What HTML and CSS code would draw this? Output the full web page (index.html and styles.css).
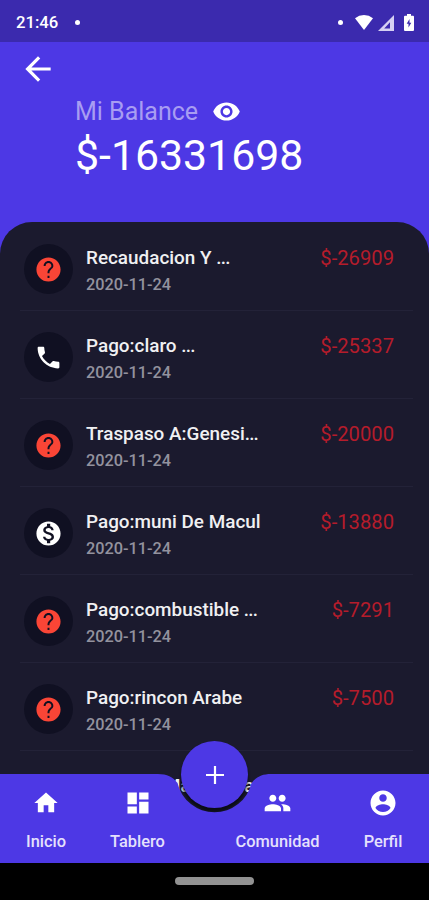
FILE: index.html
```html
<!DOCTYPE html>
<html lang="es">
<head>
<meta charset="utf-8">
<title>Mi Balance</title>
<link rel="stylesheet" href="styles.css">
</head>
<body>
<svg class="defs" aria-hidden="true">
  <symbol id="help" viewBox="0 0 24 24"><path d="M12 2C6.480 2 2 6.480 2 12s4.480 10 10 10 10-4.480 10-10S17.520 2 12 2zm.800 17h-1.600v-1.800h1.600v1.800zm2.070-7.750l-.9.920C13.250 12.900 12.800 13.500 12.800 15h-1.600v-.5c0-1.100.450-2.100 1.170-2.830l1.240-1.260c.370-.360.790-.860.790-1.410 0-1.300-1.100-2.400-2.400-2.400s-2.400 1.100-2.400 2.400H8c0-2.210 1.790-4 4-4s4 1.790 4 4c0 .880-.560 1.680-1.130 2.250z"/></symbol>
  <symbol id="phone" viewBox="0 0 24 24"><path d="M6.620 10.790c1.440 2.830 3.760 5.140 6.590 6.590l2.200-2.200c.270-.270.670-.360 1.020-.240 1.120.370 2.330.570 3.570.570.550 0 1 .450 1 1V20c0 .550-.450 1-1 1-9.390 0-17-7.610-17-17 0-.550.450-1 1-1h3.500c.550 0 1 .450 1 1 0 1.250.2 2.450.570 3.570.110.350.030.740-.250 1.020l-2.200 2.200z"/></symbol>
  <symbol id="money" viewBox="0 0 24 24"><path d="M12 2C6.480 2 2 6.480 2 12s4.480 10 10 10 10-4.480 10-10S17.520 2 12 2zm1.410 16.090V20h-2.670v-1.930c-1.710-.360-3.160-1.460-3.270-3.400h1.960c.1 1.050.820 1.870 2.650 1.870 1.960 0 2.400-.980 2.400-1.590 0-.830-.440-1.610-2.670-2.140-2.480-.6-4.180-1.620-4.180-3.670 0-1.720 1.390-2.840 3.110-3.210V4h2.670v1.950c1.860.450 2.790 1.860 2.850 3.390H14.300c-.050-1.110-.640-1.870-2.220-1.870-1.500 0-2.400.680-2.400 1.640 0 .840.650 1.390 2.670 1.910s4.180 1.390 4.180 3.910c-.010 1.830-1.380 2.830-3.120 3.160z"/></symbol>
</svg>

<div class="screen">
  <header class="status">
    <span class="time">21:46</span><i class="dot"></i>
    <span class="status-icons">
      <i class="dot"></i>
      <svg class="wifi" viewBox="0 0 18 15"><path d="M0 3.200Q4 0 9 0t9 3.200L9 15z"/></svg>
      <svg class="signal" viewBox="0 0 16 16"><path fill-rule="evenodd" d="M0 16L16 0v16zM6.200 13.600H12V7.200z"/></svg>
      <svg class="battery" viewBox="0 0 10 17"><path fill-rule="evenodd" d="M3 0h4v1.700h2q1 0 1 1V16q0 1-1 1H1q-1 0-1-1V2.700q0-1 1-1h2zM5.500 5L2.700 9.800h1.800V13.500L7.300 8.700H5.500z"/></svg>
    </span>
  </header>

  <section class="balance">
    <svg class="back" viewBox="0 0 24 24"><path d="M20 11H7.830l5.590-5.590L12 4l-8 8 8 8 1.410-1.410L7.830 13H20z"/></svg>
    <div class="label">Mi Balance
      <svg class="eye" viewBox="0 0 24 24"><path d="M12 4.500C7 4.500 2.730 7.610 1 12c1.730 4.390 6 7.500 11 7.500s9.270-3.110 11-7.500c-1.730-4.390-6-7.500-11-7.500zM12 17c-2.760 0-5-2.240-5-5s2.240-5 5-5 5 2.240 5 5-2.240 5-5 5zm0-8c-1.660 0-3 1.340-3 3s1.340 3 3 3 3-1.340 3-3-1.340-3-3-3z"/></svg>
    </div>
    <div class="total">$-16331698</div>
  </section>

  <main class="list">
    <article class="row"><span class="badge red"><svg><use href="#help"/></svg></span><div class="info"><h2>Recaudacion Y <span class="more">...</span></h2><p>2020-11-24</p></div><b class="amount">$-26909</b></article>
    <article class="row"><span class="badge"><svg><use href="#phone"/></svg></span><div class="info"><h2>Pago:claro <span class="more">...</span></h2><p>2020-11-24</p></div><b class="amount">$-25337</b></article>
    <article class="row"><span class="badge red"><svg><use href="#help"/></svg></span><div class="info"><h2>Traspaso A:Genesi<span class="more">...</span></h2><p>2020-11-24</p></div><b class="amount">$-20000</b></article>
    <article class="row"><span class="badge"><svg><use href="#money"/></svg></span><div class="info"><h2>Pago:muni De Macul</h2><p>2020-11-24</p></div><b class="amount">$-13880</b></article>
    <article class="row"><span class="badge red"><svg><use href="#help"/></svg></span><div class="info"><h2>Pago:combustible <span class="more">...</span></h2><p>2020-11-24</p></div><b class="amount">$-7291</b></article>
    <article class="row"><span class="badge red"><svg><use href="#help"/></svg></span><div class="info"><h2>Pago:rincon Arabe</h2><p>2020-11-24</p></div><b class="amount">$-7500</b></article>
    <article class="row last"><span class="badge"></span><div class="info"><h2>Pago:las Mandarina</h2></div></article>
  </main>

  <nav class="tabs">
    <span class="add"><svg viewBox="0 0 18 18"><path d="M7.900 0h2.200v7.900H18v2.200h-7.900V18H7.900v-7.900H0V7.900h7.900z"/></svg></span>
    <svg class="tabs-shape" viewBox="0 0 429 89"><path d="M0 0H158C167 0 173 3 177.500 9A38 38 0 0 0 251.500 9C256 3 262 0 271 0H429V89H0z"/></svg>
    <a class="tab home"><svg viewBox="0 0 24 24"><path d="M10 20v-6h4v6h5v-8h3L12 3 2 12h3v8z"/></svg>Inicio</a>
    <a class="tab board"><svg viewBox="0 0 24 24"><path d="M3 13h8V3H3v10zm0 8h8v-6H3v6zm10 0h8V11h-8v10zm0-18v6h8V3h-8z"/></svg>Tablero</a>
    <a class="tab people"><svg viewBox="0 0 24 24"><path d="M16 11c1.660 0 2.990-1.340 2.990-3S17.660 5 16 5s-3 1.340-3 3 1.340 3 3 3zm-8 0c1.660 0 2.990-1.340 2.990-3S9.660 5 8 5 5 6.340 5 8s1.340 3 3 3zm0 2c-2.330 0-7 1.170-7 3.500V19h14v-2.500C15 14.170 10.330 13 8 13zm8 0c-.290 0-.620.020-.970.050 1.160.840 1.970 1.970 1.970 3.450V19h6v-2.500c0-2.330-4.670-3.500-7-3.500z"/></svg>Comunidad</a>
    <a class="tab profile"><svg viewBox="0 0 24 24"><path d="M12 2C6.480 2 2 6.480 2 12s4.480 10 10 10 10-4.480 10-10S17.520 2 12 2zm0 3c1.660 0 3 1.340 3 3s-1.340 3-3 3-3-1.340-3-3 1.340-3 3-3zm0 14.200c-2.500 0-4.710-1.280-6-3.220.030-1.990 4-3.080 6-3.080s5.970 1.090 6 3.080c-1.290 1.940-3.500 3.220-6 3.220z"/></svg>Perfil</a>
  </nav>
  <footer class="system"><i class="pill"></i></footer>
</div>
</body>
</html>
```
FILE: styles.css
```css
* { box-sizing: border-box; }
body { margin: 0; font-family: Roboto, "Liberation Sans", sans-serif; background: #000; }
svg { display: block; fill: currentColor; }
h2, p { margin: 0; }
.defs { position: absolute; width: 0; height: 0; }
.screen { width: 429px; height: 900px; display: flex; flex-direction: column; overflow: hidden; background: #4d38e5; color: #fff; }

.status { height: 42px; flex: none; display: flex; align-items: center; padding: 3px 15px 0 16px; background: #3b2aae; }
.time { font-size: 16.700px; font-weight: 500; }
.dot { width: 5px; height: 5px; border-radius: 50%; background: #fff; margin-left: 17px; }
.status-icons { margin-left: auto; display: flex; align-items: center; }
.wifi { width: 18px; height: 15px; margin-left: 12px; }
.signal { width: 16px; height: 16px; margin-left: 5px; color: #d5d0f3; }
.battery { width: 10px; height: 17px; margin-left: 10px; }

.balance { height: 180px; flex: none; padding: 8px 0 0 75px; }
.back { width: 38px; height: 38px; margin-left: -56px; }
.label { display: flex; align-items: center; gap: 14px; height: 30px; margin-top: 8px; font-size: 25px; color: #a89df2; }
.eye { width: 29px; height: 29px; color: #fff; }
.total { font-size: 42.800px; line-height: 52px; margin-top: 3px; }

.list { height: 600px; flex: none; padding-top: 1px; border-radius: 32px 32px 0 0; background: #1b1a2e; }
.row { height: 88px; margin: 0 16px 0 20px; padding: 21px 19px 0 4px; display: flex; align-items: flex-start; border-bottom: 1px solid #232238; }
.badge { width: 49px; height: 50px; flex: none; border-radius: 50%; background: #101022; display: flex; align-items: center; justify-content: center; }
.badge svg { width: 29px; height: 29px; }
.red { color: #fa4536; }
.info { margin-left: 13px; padding-top: 2px; white-space: nowrap; }
.info h2 { font-size: 18.900px; line-height: 24px; font-weight: 500; color: #f0f0f2; }
.more { letter-spacing: -.8px; }
.info p { margin-top: 4px; font-size: 16.300px; line-height: 22px; font-weight: 500; color: #93929e; }
.amount { margin-left: auto; padding-top: 2px; font-size: 20.200px; line-height: 25px; font-weight: 400; color: #b51c2b; }
.last { border: 0; }
.last .badge { background: none; }

.tabs { position: relative; height: 89px; flex: none; display: flex; margin-top: -48px; }
.tabs-shape { position: absolute; inset: 0; width: 429px; height: 89px; color: #4d38e5; }
.tab { position: relative; display: flex; flex-direction: column; align-items: center; padding-top: 15px; font-size: 16.400px; line-height: 20px; font-weight: 500; color: #e5e1fc; }
.tab svg { width: 28px; height: 28px; margin-bottom: 15px; color: #fff; }
.home { width: 92px; }
.board { width: 91px; }
.people { width: 91px; margin-left: 49px; }
.people svg { width: 29px; }
.profile { width: 90px; margin-left: 15px; }
.tab.profile svg { width: 30px; height: 30px; margin: -1px 0 14px; }
.add { position: absolute; left: 181px; top: -33px; width: 67px; height: 67px; border-radius: 50%; background: #4d38e5; box-shadow: 0 4px 3px rgba(5, 8, 16, .75); display: flex; align-items: center; justify-content: center; }
.add svg { width: 18px; height: 18px; }

.system { height: 37px; flex: none; display: flex; justify-content: center; padding-top: 14px; background: #000; }
.pill { width: 79px; height: 8px; border-radius: 4px; background: #929292; }
```
